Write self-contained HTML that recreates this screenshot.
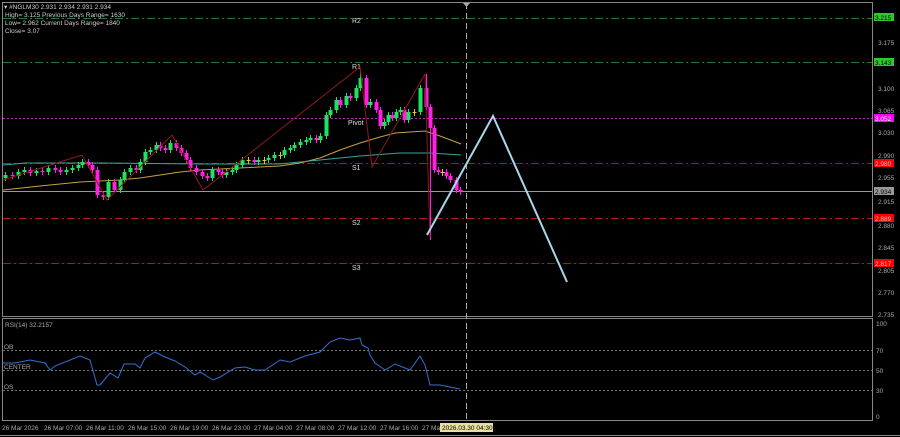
<!DOCTYPE html>
<html><head><meta charset="utf-8"><style>
html,body{margin:0;padding:0;background:#000;width:900px;height:437px;overflow:hidden}
svg{display:block;font-family:"Liberation Sans",sans-serif}
</style></head><body>
<svg id="s" width="900" height="437" viewBox="0 0 900 437">
<rect width="900" height="437" fill="#000"/>
<!-- main pane border -->
<rect x="2.5" y="2.5" width="870" height="314" fill="none" stroke="#888" stroke-width="1"/>
<rect x="2.5" y="318.5" width="870" height="102" fill="none" stroke="#888" stroke-width="1"/>
<line x1="0" y1="435.5" x2="900" y2="435.5" stroke="#888"/>
<!-- levels -->
<g stroke-width="1" fill="none">
<line x1="3" y1="18.5" x2="872" y2="18.5" stroke="#2f7a2f" stroke-dasharray="8,3,2,3"/>
<line x1="3" y1="62.5" x2="872" y2="62.5" stroke="#2f7a2f" stroke-dasharray="8,3,2,3"/>
<line x1="3" y1="118.5" x2="872" y2="118.5" stroke="#c020c0" stroke-dasharray="2,2"/>
<line x1="3" y1="163.5" x2="872" y2="163.5" stroke="#b01818" stroke-dasharray="8,3,2,3"/>
<line x1="3" y1="191.5" x2="872" y2="191.5" stroke="#999"/>
<line x1="3" y1="218.5" x2="872" y2="218.5" stroke="#b01818" stroke-dasharray="8,3,2,3"/>
<line x1="3" y1="263.5" x2="872" y2="263.5" stroke="#b01818" stroke-dasharray="8,3,2,3"/>
<line x1="466.5" y1="3" x2="466.5" y2="420" stroke="#aaa" stroke-dasharray="6,4"/>
</g>
<polygon points="463,3 470,3 466.5,7" fill="#aaa"/>
<g fill="#ddd" font-size="7">
<text x="352" y="23">R2</text><text x="352" y="69">R1</text><text x="348" y="125">Pivot</text>
<text x="352" y="170">S1</text><text x="352" y="225">S2</text><text x="352" y="270">S3</text>
</g>
<!-- MAs -->
<polyline fill="none" stroke="#c8a040" stroke-width="1" points="3,190 40,186 80,182 120,180 140,178 180,172 200,170 240,168 280,166 300,163 320,158 340,150 360,143 380,137 395,133 410,132 425,131 440,136 461,144"/>
<polyline fill="none" stroke="#40a0a0" stroke-width="1" points="3,165 25,163 100,163 200,164 280,164 320,160 360,156 400,153 430,153 461,155"/>
<g id="c"></g>
<polyline fill="none" stroke="#8b1a1a" stroke-width="1" points="3,180 82,155 107,200 172,135 203,190 360,67 372,167 425,74 430,237"/>
<!-- projection -->
<polyline fill="none" stroke="#a8d8ea" stroke-width="2" points="427,235 493,116 567,282"/>
<!-- header text -->
<g fill="#ccc" font-size="6.5">
<text x="4" y="9">▾ #NGLM30  2.931 2.934 2.931 2.934</text>
<text x="5" y="17">High= 3.125   Previous Days Range= 1630</text>
<text x="5" y="25">Low= 2.962   Current Days Range= 1840</text>
<text x="5" y="33">Close= 3.07</text>
</g>
<!-- price axis -->
<g fill="#aaa" font-size="6.5">
<text x="878" y="45">3.175</text><text x="878" y="91">3.100</text><text x="878" y="113">3.065</text>
<text x="878" y="135">3.030</text><text x="878" y="158">2.990</text><text x="878" y="180">2.955</text>
<text x="878" y="204">2.915</text><text x="878" y="228">2.880</text><text x="878" y="250">2.845</text>
<text x="878" y="273">2.805</text><text x="878" y="295">2.770</text><text x="878" y="317">2.735</text>
<text x="876" y="326">100</text><text x="876" y="353">70</text><text x="876" y="373">50</text>
<text x="876" y="393">30</text><text x="876" y="419">0</text>
</g>
<g font-size="6.5">
<rect x="874" y="13" width="20" height="8" fill="#2ec82e"/><text x="875" y="20" fill="#000">3.215</text>
<rect x="874" y="58" width="20" height="8" fill="#2ec82e"/><text x="875" y="65" fill="#000">3.143</text>
<rect x="874" y="114" width="20" height="8" fill="#ff00ff"/><text x="875" y="121" fill="#fff">3.052</text>
<rect x="874" y="159" width="20" height="8" fill="#f00"/><text x="875" y="166" fill="#fbb">2.980</text>
<rect x="874" y="187" width="20" height="8" fill="#999"/><text x="875" y="194" fill="#000">2.934</text>
<rect x="874" y="214" width="20" height="8" fill="#f00"/><text x="875" y="221" fill="#fbb">2.889</text>
<rect x="874" y="259" width="20" height="8" fill="#f00"/><text x="875" y="266" fill="#fbb">2.817</text>
</g>
<!-- RSI -->
<g stroke="#777" stroke-dasharray="2,2"><line x1="3" y1="350.5" x2="872" y2="350.5"/><line x1="3" y1="370.5" x2="872" y2="370.5"/><line x1="3" y1="390.5" x2="872" y2="390.5"/></g>
<g fill="#aaa" font-size="6.5"><text x="5" y="327">RSI(14) 32.2157</text><text x="4" y="349">OB</text><text x="4" y="369">CENTER</text><text x="4" y="389">OS</text></g>
<polyline fill="none" stroke="#3a6fd0" stroke-width="1" points="3,363 15,363 30,360 40,362 45,363 50,370 55,366 80,356 90,360 97,385 100,385 110,373 118,378 124,364 135,364 140,368 145,358 155,352 165,357 175,361 185,367 195,375 200,372 213,380 220,377 235,368 245,367 255,370 265,370 280,360 290,362 305,356 320,352 330,342 340,338 350,340 360,338 362,345 368,348 370,355 375,363 385,370 395,364 410,370 420,356 425,365 430,385 440,385 460,389"/>
<!-- time axis -->
<g fill="#aaa" font-size="6.5">
<text x="2" y="430">26 Mar 2026</text><text x="44" y="430">26 Mar 07:00</text><text x="86" y="430">26 Mar 11:00</text>
<text x="128" y="430">26 Mar 15:00</text><text x="170" y="430">26 Mar 19:00</text><text x="212" y="430">26 Mar 23:00</text>
<text x="254" y="430">27 Mar 04:00</text><text x="296" y="430">27 Mar 08:00</text><text x="338" y="430">27 Mar 12:00</text>
<text x="380" y="430">27 Mar 16:00</text><text x="422" y="430">27 Ma</text>
</g>
<rect x="440" y="423" width="53" height="9" fill="#e8e0a0"/><text x="442" y="430" font-size="6.5" fill="#000">2026.03.30 04:30</text>
</svg>
<script>
var d=[[5,175],[12,176],[18,172],[24,170],[30,173],[36,171],[42,172],[48,168],[55,170],[60,172],[66,170],[72,168],[78,165],[82,162],[88,165],[92,170],[97,195],[103,197],[108,182],[114,190],[120,180],[124,172],[130,168],[136,170],[140,162],[145,152],[150,150],[156,145],[160,148],[165,150],[170,143],[176,148],[181,153],[186,160],[190,168],[196,172],[202,176],[207,178],[212,170],[218,172],[222,175],[226,172],[232,170],[236,165],[242,160],[248,160],[254,162],[258,160],[264,160],[268,158],[274,155],[280,155],[284,150],[290,148],[294,145],[300,142],[306,140],[310,138],[316,140],[320,136],[326,115],[330,110],[336,100],[340,105],[346,96],[350,98],[356,88],[360,78],[366,105],[370,102],[376,110],[380,126],[384,122],[388,115],[392,118],[396,112],[400,110],[404,120],[408,112],[414,112],[420,88],[426,107],[430,128],[434,170],[438,172],[442,172],[446,176],[450,180],[456,190],[460,192]];
var g=document.getElementById('c'),h='',p=178;
d.forEach(function(c){var x=c[0],y=c[1],o=p,t=Math.min(o,y),b=Math.max(o,y),col=y<o?'#22e060':'#ff20e0';if(b-t<1){b=t+1;col='#e0c040';}
var lo=b+3,hi=t-3;if(x==430){lo=240;}if(x==360)hi=70;if(x==426)hi=74;
h+='<line x1="'+(x+0.5)+'" y1="'+hi+'" x2="'+(x+0.5)+'" y2="'+lo+'" stroke="'+col+'"/><rect x="'+(x-1.5)+'" y="'+t+'" width="4" height="'+(b-t)+'" fill="'+col+'"/>';p=y;});
g.innerHTML=h;
</script>
</body></html>
